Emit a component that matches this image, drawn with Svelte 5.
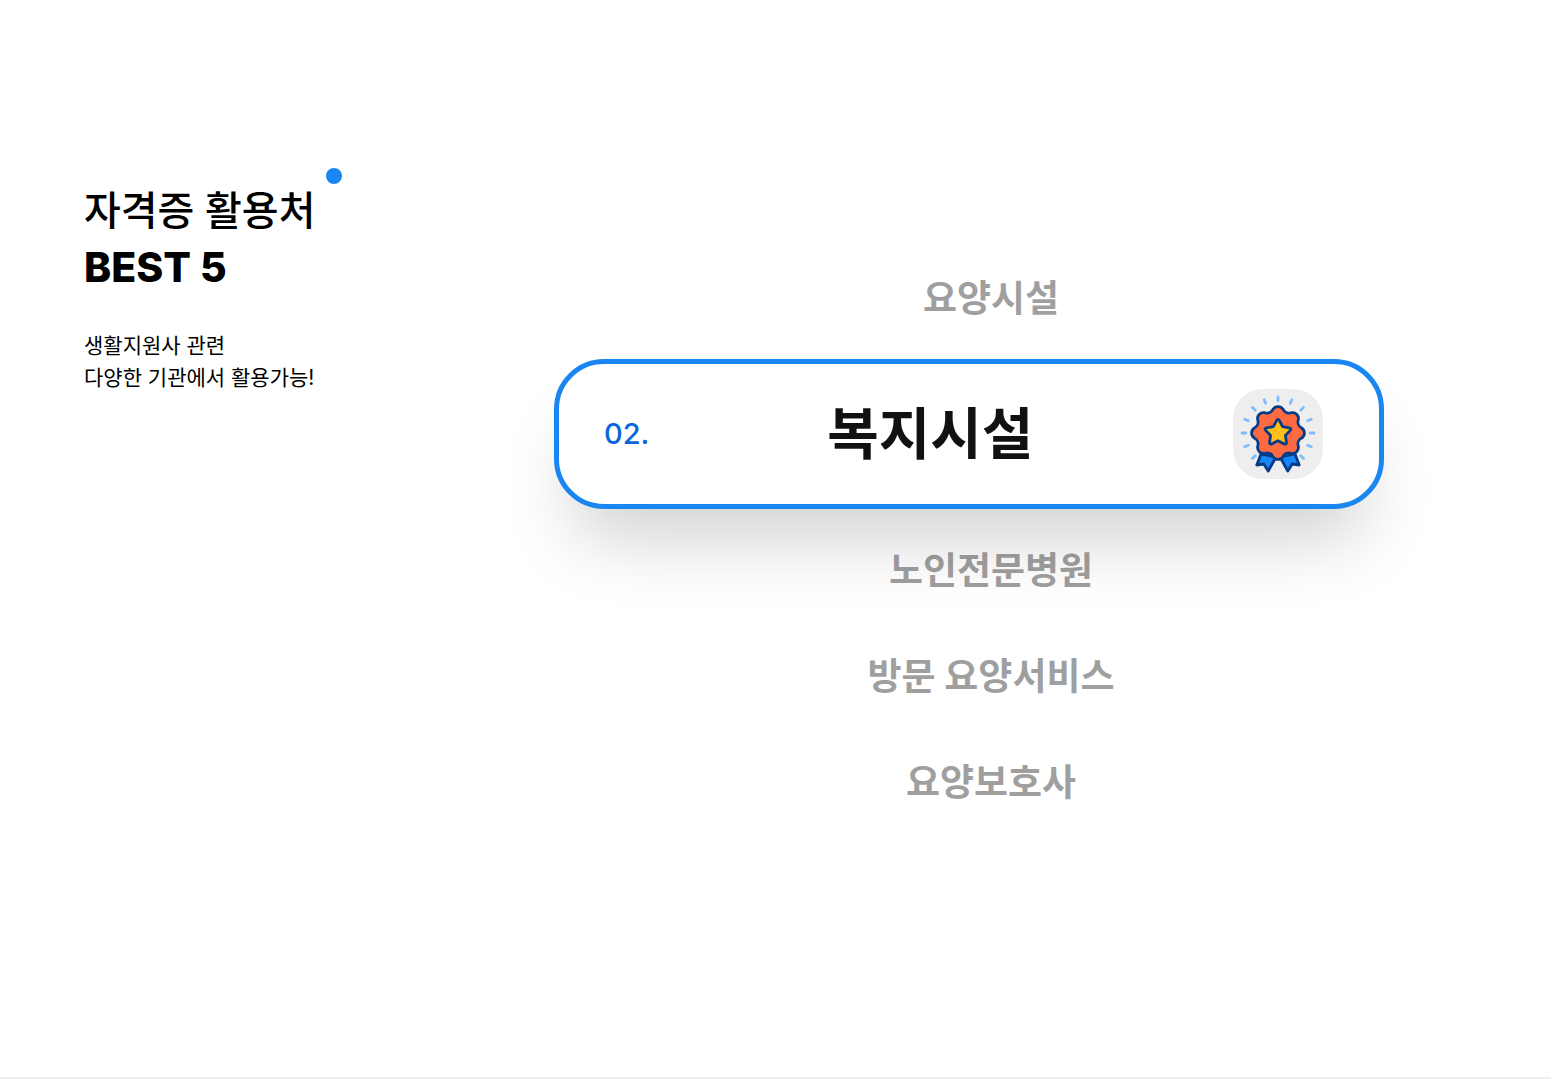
<script>
  const places = ['요양시설', '복지시설', '노인전문병원', '방문 요양서비스', '요양보호사'];
  const active = 1;

  const polar = (r, deg) => {
    const a = (deg * Math.PI) / 180;
    return `${(45 + r * Math.sin(a)).toFixed(2)} ${(44 - r * Math.cos(a)).toFixed(2)}`;
  };

  // Eight round lobes joined by shallow hollows
  const rosette =
    `M${polar(24.2, -12)}` +
    Array.from({ length: 8 }, (_, i) => i * 45)
      .map((deg) => `A6 6 0 0 1 ${polar(24.2, deg + 12)}A6.5 6.5 0 0 0 ${polar(24.2, deg + 33)}`)
      .join('') +
    'Z';

  // Five-pointed star with softened tips
  const star =
    Array.from({ length: 5 }, (_, i) => i * 72)
      .map(
        (deg, i) =>
          `${i ? 'L' : 'M'}${polar(12.6, deg - 6)}Q${polar(14.6, deg)} ${polar(12.6, deg + 6)}L${polar(7.8, deg + 36)}`
      )
      .join('') + 'Z';

  const rays = Array.from({ length: 13 }, (_, i) => (i - 6) * 22.5)
    .map((deg) => `M${polar(32.2, deg)}L${polar(36, deg)}`)
    .join('');
</script>

<section class="usage">
  <header class="intro">
    <h2>자격증 활용처<span class="dot"></span><strong>BEST 5</strong></h2>
    <p>생활지원사 관련<br />다양한 기관에서 활용가능!</p>
  </header>

  <ol class="places">
    {#each places as place, i}
      {#if i === active}
        <li class="card">
          <span class="number">0{i + 1}.</span>
          <strong class="name">{place}</strong>
          <svg class="badge" viewBox="0 0 90 90" aria-hidden="true">
            <path class="rays" d={rays} />
            <g class="outlined">
              <path class="ribbon" d="M28 65 23.8 76 30.8 75 35.2 82 43 68Z" />
              <path class="ribbon" d="M62 65 66.2 76 59.2 75 54.8 82 47 68Z" />
              <path class="rosette" d={rosette} />
              <path class="star" d={star} />
            </g>
          </svg>
        </li>
      {:else}
        <li class="item">{place}</li>
      {/if}
    {/each}
  </ol>
</section>

<style>
  :global(body) {
    margin: 0;
    background: #fff;
  }

  .usage {
    box-sizing: border-box;
    display: flex;
    min-height: 100vh;
    padding: 183px 167px 180px 84px;
    border-bottom: 2px solid #ebf0f4;
    color: #000;
    font-family: Inter, 'Noto Sans CJK KR', sans-serif;
  }

  .intro {
    flex: 0 0 470px;
  }

  h2 {
    position: relative;
    width: max-content;
    margin: 0;
    font-size: 40px;
    font-weight: 500;
    line-height: 56px;
  }

  h2 strong {
    display: block;
    font-size: 41px;
    font-weight: 800;
  }

  .dot {
    position: absolute;
    top: -15px;
    right: -27px;
    width: 16px;
    height: 16px;
    border-radius: 50%;
    background: #1a86f2;
  }

  .intro p {
    margin: 35px 0 0;
    font-size: 21px;
    font-weight: 400;
    line-height: 32px;
    color: #000;
  }

  .places {
    flex: 1;
    margin: 62px 0 0;
    padding: 0;
    list-style: none;
    text-align: center;
  }

  .item {
    position: relative;
    padding: 2px 0 0 44px;
    font-size: 37px;
    font-weight: 700;
    line-height: 104px;
    color: #111;
    opacity: 0.4;
  }

  .card {
    box-sizing: border-box;
    display: flex;
    align-items: center;
    height: 150px;
    margin: 8px 0;
    padding: 0 56px 0 45px;
    border: 5px solid #1a86f2;
    border-radius: 50px;
    background: #fff;
    box-shadow: 0 50px 70px -20px rgba(0, 0, 0, 0.18);
  }

  .number {
    padding-bottom: 2px;
    font-size: 29px;
    font-weight: 500;
    color: #0a66dc;
  }

  .name {
    flex: 1;
    padding: 0 22px 10px 0;
    font-size: 56px;
    font-weight: 700;
    color: #111;
  }

  .badge {
    width: 90px;
    height: 90px;
    border-radius: 30px;
    background: #eee;
  }

  .rays {
    fill: none;
    stroke: #7dbcff;
    stroke-width: 2.8;
    stroke-linecap: round;
  }

  .outlined {
    stroke: #063b87;
    stroke-width: 2.8;
    stroke-linejoin: round;
  }

  .ribbon {
    fill: #1687f5;
  }

  .rosette {
    fill: #ff6b41;
  }

  .star {
    fill: #ffbe18;
  }
</style>
